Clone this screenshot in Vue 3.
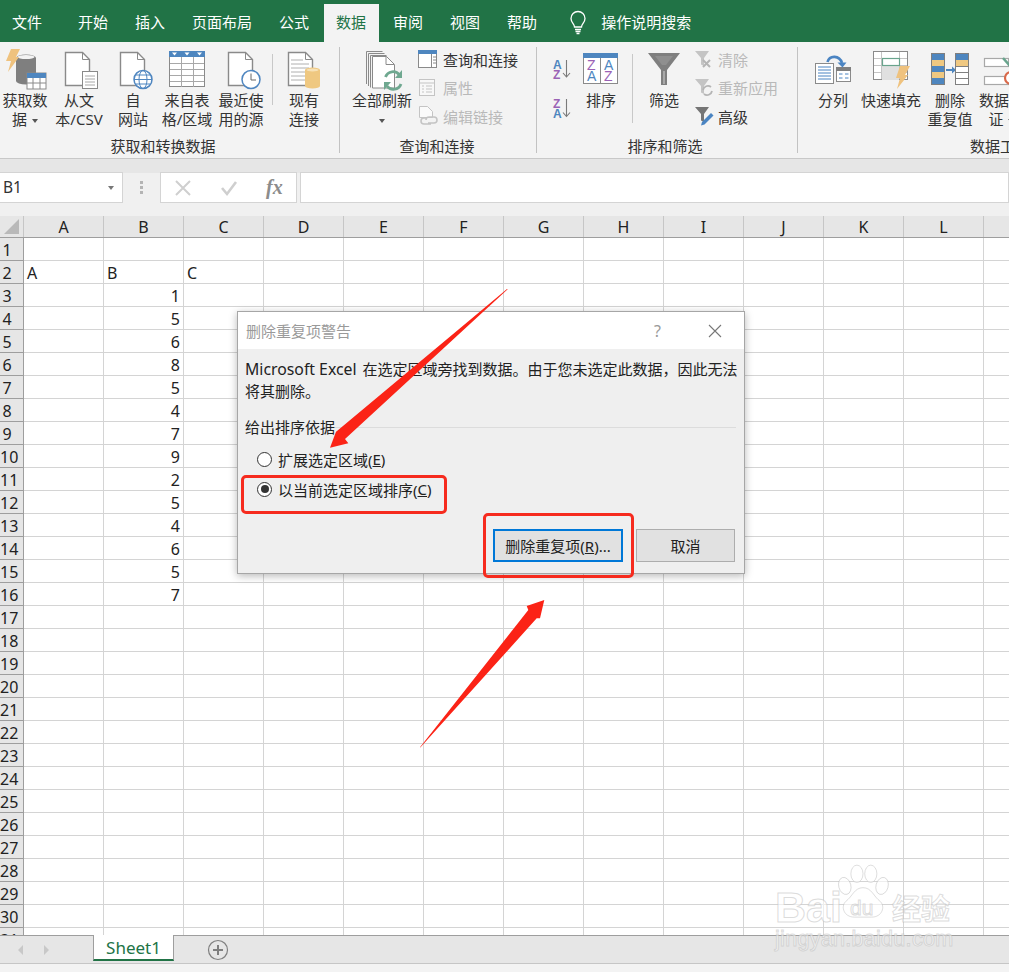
<script setup>
const tabs = ['开始', '插入', '页面布局', '公式', '数据', '审阅', '视图', '帮助']
const columns = 'ABCDEFGHIJKLM'.split('')
const rowNumbers = Array.from({ length: 31 }, (_, i) => i + 1)

// column B values, keyed by row number
const bValues = { 2: 'B', 3: 1, 4: 5, 5: 6, 6: 8, 7: 5, 8: 4, 9: 7, 10: 9, 11: 2, 12: 5, 13: 4, 14: 6, 15: 5, 16: 7 }

const cellText = (row, col) => {
  if (row === 2 && col === 'A') return 'A'
  if (row === 2 && col === 'C') return 'C'
  if (col === 'B') return bValues[row] ?? ''
  return ''
}
const isNumber = (row, col) => col === 'B' && row > 2
</script>

<template>
  <div class="app">
    <div class="tabbar">
      <span class="tab file">文件</span>
      <span v-for="t in tabs" :key="t" class="tab" :class="{ active: t === '数据' }">{{ t }}</span>
      <svg class="bulb" width="18" height="24" viewBox="0 0 18 24" fill="none" stroke="#fff" stroke-width="1.3">
        <path d="M5.5 16c0-3-3.5-4.500-3.500-8.500a7 7 0 0 1 14 0c0 4-3.500 5.500-3.500 8.500z" />
        <path d="M6 18.500h6M6.500 20.500h5M7.500 22.500h3" />
      </svg>
      <span class="search">操作说明搜索</span>
    </div>

    <div class="ribbon">
      <div class="group g1">
        <div class="group-body">
          <div class="tool w50">
            <svg width="50" height="44" viewBox="0 47 50 44">
              <path d="M16 58a10 3.500 0 0 1 20 0v23a10 3.500 0 0 1-20 0z" fill="#7f7f7f" />
              <ellipse cx="26" cy="57" rx="8.500" ry="2" fill="#f3f3f3" />
              <path d="M11 49h9l-4 8h3l-11 15 3-11H6z" fill="#efc27e" />
              <rect x="27" y="73" width="19" height="16" fill="#fff" stroke="#8a8a8a" />
              <rect x="27" y="73" width="19" height="5" fill="#4e86bf" />
              <path d="M33 78v11M40 78v11M27 83h19" stroke="#8a8a8a" />
            </svg>
            <div class="tool-label">获取数<br />据 <i class="caret"></i></div>
          </div>
          <div class="tool w58">
            <svg width="40" height="44" viewBox="60 47 40 44">
              <path d="M66.500 52.500h17l7 7v26h-24z" fill="#fff" stroke="#8a8a8a" stroke-width="1.400" />
              <path d="M83.500 52.500v7h7" fill="none" stroke="#8a8a8a" />
              <rect x="83.500" y="71.500" width="15" height="17" fill="#fff" stroke="#8a8a8a" />
              <path d="M86 76h10M86 79h10M86 82h10M86 85h10" stroke="#a8a8a8" />
            </svg>
            <div class="tool-label">从文<br />本/CSV</div>
          </div>
          <div class="tool w50">
            <svg width="40" height="44" viewBox="114 47 40 44">
              <path d="M121.500 52.500h17l7 7v26h-24z" fill="#fff" stroke="#8a8a8a" stroke-width="1.400" />
              <path d="M138.500 52.500v7h7" fill="none" stroke="#8a8a8a" />
              <circle cx="144" cy="79.500" r="9" fill="#fff" stroke="#4f86c0" stroke-width="1.500" />
              <ellipse cx="144" cy="79.500" rx="4" ry="9" fill="none" stroke="#4f86c0" />
              <path d="M135 79.500h18M136.500 75h15M136.500 84h15" stroke="#4f86c0" />
            </svg>
            <div class="tool-label">自<br />网站</div>
          </div>
          <div class="tool w58">
            <svg width="40" height="44" viewBox="167 47 40 44">
              <rect x="169.500" y="51.500" width="35" height="35" fill="#fff" stroke="#8a8a8a" />
              <rect x="169" y="51" width="36" height="6" fill="#4e86bf" />
              <path d="M172 52.500h5l-2.500 3zM184.500 52.500h5l-2.500 3zM197 52.500h5l-2.500 3z" fill="#fff" />
              <path d="M181.500 57v30M193.500 57v30M170 63.500h34M170 69.500h34M170 75.500h34M170 81.500h34" stroke="#a8a8a8" />
            </svg>
            <div class="tool-label">来自表<br />格/区域</div>
          </div>
          <div class="tool w50">
            <svg width="40" height="44" viewBox="221 47 40 44">
              <path d="M228.500 52.500h17l7 7v26h-24z" fill="#fff" stroke="#8a8a8a" stroke-width="1.400" />
              <path d="M245.500 52.500v7h7" fill="none" stroke="#8a8a8a" />
              <circle cx="251" cy="79.500" r="9" fill="#fff" stroke="#4f86c0" stroke-width="1.500" />
              <path d="M251 73.500v6.500h5" fill="none" stroke="#666" />
            </svg>
            <div class="tool-label">最近使<br />用的源</div>
          </div>
          <div class="vsep short"></div>
          <div class="tool existing">
            <svg width="40" height="44" viewBox="288 47 40 44">
              <path d="M292.500 52.500h17l7 7v26h-24z" fill="#fff" stroke="#8a8a8a" stroke-width="1.400" />
              <path d="M309.500 52.500v7h7" fill="none" stroke="#8a8a8a" />
              <path d="M295 60h12M295 64h18M295 68h18M295 72h14M295 76h14M295 80h14" stroke="#b0b0b0" />
              <path d="M309 70a7.500 2.500 0 0 1 15 0v16a7.500 2.500 0 0 1-15 0z" fill="#efc881" />
              <ellipse cx="316.500" cy="70" rx="6" ry="1.500" fill="#f7e2b8" />
            </svg>
            <div class="tool-label">现有<br />连接</div>
          </div>
        </div>
        <div class="group-label">获取和转换数据</div>
      </div>

      <div class="group g2">
        <div class="group-body">
          <div class="tool refresh">
            <svg width="40" height="44" viewBox="362 47 40 44">
              <path d="M366.500 84V51.500h16M368.500 86V53.500h16M370.500 87.500V55.500h16" fill="none" stroke="#8a8a8a" />
              <path d="M372.500 56.500h14l8 8v23.500h-22z" fill="#fff" stroke="#8a8a8a" />
              <path d="M386 56.500v8h8" fill="none" stroke="#8a8a8a" />
              <path d="M385.500 77a8 8 0 0 1 14-2M401 84a8 8 0 0 1-14 2" fill="none" stroke="#6fa890" stroke-width="2.800" />
              <path d="M402 70v8h-7zM384 90v-8h7z" fill="#6fa890" />
            </svg>
            <div class="tool-label">全部刷新<br /><i class="caret"></i></div>
          </div>
          <div class="small-col">
            <div class="small-item">
              <svg width="20" height="18" viewBox="419 50 20 18">
                <rect x="419.500" y="50.500" width="18" height="17" fill="#fff" stroke="#8a8a8a" />
                <rect x="419" y="50" width="19" height="4" fill="#4e86bf" />
                <path d="M432.500 54v13M434 57h3M434 60h3M434 63h3" stroke="#8a8a8a" />
              </svg>
              <span>查询和连接</span>
            </div>
            <div class="small-item off">
              <svg width="20" height="18" viewBox="420 79 20 18">
                <rect x="421.500" y="79.500" width="15" height="16" fill="#f8f8f8" stroke="#c4c4c4" />
                <path d="M421 83h16M424 86h2M428 86h6M424 89h2M428 89h6M424 92h2M428 92h6" stroke="#c4c4c4" />
              </svg>
              <span>属性</span>
            </div>
            <div class="small-item off">
              <svg width="20" height="20" viewBox="420 108 20 20">
                <path d="M421.500 108.500h8l5 5v6h-13z" fill="#fafafa" stroke="#c4c4c4" />
                <path d="M428 122a3 3 0 0 1 3-3h2.500M433 126h-7a3 3 0 0 1 0-6h3M430 125h6a3 3 0 0 0 0-6h-3" fill="none" stroke="#c4c4c4" stroke-width="1.600" />
              </svg>
              <span>编辑链接</span>
            </div>
          </div>
        </div>
        <div class="group-label">查询和连接</div>
      </div>

      <div class="group g3">
        <div class="group-body">
          <div class="sort-col">
            <svg width="20" height="20" viewBox="552 59 20 20">
              <text x="553" y="69" class="sort-a">A</text>
              <text x="553" y="78.500" class="sort-z">Z</text>
              <path d="M566.500 60v16.500M563 73l3.500 4 3.500-4" fill="none" stroke="#7a7a7a" stroke-width="1.100" />
            </svg>
            <svg width="20" height="22" viewBox="552 97 20 22">
              <text x="553" y="107.500" class="sort-z">Z</text>
              <text x="553" y="118" class="sort-a">A</text>
              <path d="M566.500 99v17M563 112.500l3.500 4 3.500-4" fill="none" stroke="#7a7a7a" stroke-width="1.100" />
            </svg>
          </div>
          <div class="tool sort">
            <svg width="38" height="44" viewBox="582 47 38 44">
              <rect x="583.500" y="53.500" width="34" height="30" fill="#fff" stroke="#8a8a8a" />
              <rect x="583" y="53" width="35" height="5" fill="#4e86bf" />
              <path d="M600.500 58v26" stroke="#8a8a8a" />
              <text x="587" y="70" class="sort-big z">Z</text>
              <text x="587" y="81" class="sort-big a">A</text>
              <text x="604" y="70" class="sort-big a">A</text>
              <text x="604" y="81" class="sort-big z">Z</text>
            </svg>
            <div class="tool-label">排序</div>
          </div>
          <div class="vsep tall"></div>
          <div class="tool filter">
            <svg width="36" height="44" viewBox="646 47 36 44">
              <path d="M648 53h32l-13 17v15h-6V70z" fill="#7f7f7f" />
              <path d="M655 56h18l-7 9h-4z" fill="#8f8f8f" />
              <path d="M663 71h2v13h-2z" fill="#a9a9a9" />
            </svg>
            <div class="tool-label">筛选</div>
          </div>
          <div class="small-col filters">
            <div class="small-item off">
              <svg width="18" height="20" viewBox="694 49 18 20">
                <path d="M695 51h14l-5 7v8l-3-1.500V58z" fill="#c4c4c4" />
                <path d="M703 60l7 7M710 60l-7 7" stroke="#b4b4b4" stroke-width="2" />
              </svg>
              <span>清除</span>
            </div>
            <div class="small-item off">
              <svg width="18" height="20" viewBox="694 78 18 20">
                <path d="M695 79h14l-5 7v8l-3-1.500V86z" fill="#c4c4c4" />
                <path d="M703 90a5 5 0 0 1 8-3M712 91a5 5 0 0 1-8 3" fill="none" stroke="#b4b4b4" stroke-width="1.800" />
              </svg>
              <span>重新应用</span>
            </div>
            <div class="small-item">
              <svg width="18" height="20" viewBox="694 107 18 20">
                <path d="M695 108h14l-5 7v8l-3-1.500V115z" fill="#757575" />
                <path d="M701 126.500l1-3.500 9-9 2.500 2.500-9 9z" fill="#4a84c2" />
              </svg>
              <span>高级</span>
            </div>
          </div>
        </div>
        <div class="group-label">排序和筛选</div>
      </div>

      <div class="group g4">
        <div class="group-body">
          <div class="tool w56">
            <svg width="40" height="44" viewBox="813 47 40 44">
              <rect x="815.500" y="63.500" width="18" height="20" fill="#fff" stroke="#8a8a8a" />
              <path d="M818 67h13M818 70h13M818 73h13M818 76h13M818 79h13" stroke="#4a84c2" />
              <rect x="836.500" y="67.500" width="14" height="14" fill="#fff" stroke="#8a8a8a" />
              <rect x="836" y="67" width="15" height="4" fill="#7f7f7f" />
              <path d="M839 74h3.500M845 74h3.500M839 78h3.500M845 78h3.500" stroke="#4a84c2" />
              <path d="M827.500 62c2-7 12-7 14.500 1" fill="none" stroke="#4a84c2" stroke-width="2.600" />
              <path d="M837.500 62.500h9l-4 5z" fill="#4a84c2" />
            </svg>
            <div class="tool-label">分列</div>
          </div>
          <div class="tool w60">
            <svg width="40" height="44" viewBox="871 47 40 44">
              <rect x="873.500" y="51.500" width="34" height="28" fill="#fff" stroke="#8a8a8a" />
              <path d="M881.500 52v27M899.500 52v27M874 58.500h33M874 65.500h33M874 72.500h33" stroke="#c4c4c4" />
              <rect x="882" y="66" width="17" height="14" fill="#e0e0e0" />
              <rect x="882.500" y="58.500" width="17" height="7" fill="#fff" stroke="#69a48d" stroke-width="1.200" />
              <path d="M900 66h10l-5 9h3l-11 14 3-11h-4z" fill="#efc27e" />
            </svg>
            <div class="tool-label">快速填充</div>
          </div>
          <div class="tool w58b">
            <svg width="40" height="44" viewBox="930 47 40 44">
              <rect x="931.500" y="53.500" width="13" height="31" fill="#fff" stroke="#7f7f7f" />
              <rect x="932" y="54" width="12" height="6" fill="#4e86bf" />
              <rect x="932" y="60" width="12" height="6" fill="#efc881" />
              <rect x="932" y="66" width="12" height="6" fill="#4e86bf" />
              <rect x="932" y="72" width="12" height="6" fill="#efc881" />
              <rect x="932" y="78" width="12" height="6" fill="#4e86bf" />
              <path d="M946 70h9" stroke="#4e86bf" stroke-width="2" />
              <path d="M952 66.500l4 3.500-4 3.500z" fill="#4e86bf" />
              <rect x="955.500" y="53.500" width="13" height="31" fill="#fff" stroke="#7f7f7f" />
              <rect x="956" y="54" width="12" height="6" fill="#4e86bf" />
              <rect x="956" y="60" width="12" height="6" fill="#efc881" />
              <path d="M956 66.500h12M956 72.500h12M956 78.500h12" stroke="#7f7f7f" />
            </svg>
            <div class="tool-label">删除<br />重复值</div>
          </div>
          <div class="tool validate">
            <svg width="50" height="44" viewBox="979 47 50 44">
              <rect x="984.500" y="58.500" width="24" height="8" fill="#fff" stroke="#a8a8a8" stroke-width="1.200" />
              <rect x="984.500" y="76.500" width="24" height="8" fill="#fff" stroke="#a8a8a8" stroke-width="1.200" />
              <path d="M1003 58l8 9" stroke="#69a48d" stroke-width="2.500" />
              <circle cx="1011" cy="78" r="6" fill="#fff" stroke="#d9694a" stroke-width="2.200" />
            </svg>
            <div class="tool-label">数据验<br />证 <i class="caret"></i></div>
          </div>
        </div>
        <div class="group-label tools-label">数据工具</div>
      </div>
    </div>

    <div class="formula-band">
      <div class="name-box">B1<i class="caret dark"></i></div>
      <div class="grip"><i></i><i></i><i></i></div>
      <div class="fx-box">
        <svg width="18" height="18" viewBox="0 0 18 18"><path d="M2 2l14 14M16 2L2 16" stroke="#cfcfcf" stroke-width="2" /></svg>
        <svg width="18" height="18" viewBox="0 0 18 18"><path d="M2 9l5 6L16 3" fill="none" stroke="#cfcfcf" stroke-width="2.600" /></svg>
        <span class="fx">fx</span>
      </div>
      <div class="formula-input"></div>
    </div>

    <div class="sheet">
      <div class="col-head">
        <div class="corner"><span class="corner-mark"></span></div>
        <div v-for="c in columns" :key="c" class="col-cell">{{ c }}</div>
      </div>
      <div v-for="r in rowNumbers" :key="r" class="row">
        <div class="row-head"><span>{{ r }}</span></div>
        <div v-for="c in columns" :key="c" class="cell" :class="{ num: isNumber(r, c) }">{{ cellText(r, c) }}</div>
      </div>
    </div>

    <div class="sheet-tabs">
      <svg class="nav" width="40" height="14" viewBox="0 0 40 14">
        <path d="M9 2L4 7l5 5zM30 2l5 5-5 5z" fill="#c8c8c8" />
      </svg>
      <div class="sheet-tab">Sheet1</div>
      <svg class="add" width="22" height="22" viewBox="0 0 22 22">
        <circle cx="11" cy="11" r="9.500" fill="none" stroke="#7f7f7f" stroke-width="1.200" />
        <path d="M11 6v10M6 11h10" stroke="#7f7f7f" stroke-width="2" />
      </svg>
    </div>
    <div class="statusbar"></div>

    <!-- dialog sits over the grid -->
    <div class="dialog">
      <div class="dialog-title">
        <span class="title-text">删除重复项警告</span>
        <span class="help">?</span>
        <svg width="14" height="14" viewBox="0 0 14 14"><path d="M1 1l12 12M13 1L1 13" stroke="#777" stroke-width="1.100" /></svg>
      </div>
      <div class="dialog-body">
        <p class="message"><span class="latin">Microsoft Excel</span> 在选定区域旁找到数据。由于您未选定此数据，因此无法<br />将其删除。</p>
        <div class="legend"><span>给出排序依据</span><i></i></div>
        <div class="radios">
          <div class="radio"><span class="dot"></span>扩展选定区域(<u>E</u>)</div>
          <div class="radio"><span class="dot on"></span>以当前选定区域排序(<u>C</u>)</div>
        </div>
        <div class="buttons">
          <button class="btn primary">删除重复项(<u>R</u>)...</button>
          <button class="btn">取消</button>
        </div>
      </div>
    </div>

    <!-- red annotations drawn on top of the screenshot -->
    <div class="mark mark-radio"></div>
    <div class="mark mark-button"></div>
    <svg class="arrows" width="1009" height="972" viewBox="0 0 1009 972">
      <path d="M507.700 289.300L345 439l3.300 4.300-18.300 4.400 6-16 1.300-1L507 289z" fill="#fb2316" />
      <path d="M420 747.300L528.300 610l-1.600-4 17.600-6-4.300 18.300-3.300-0L420.300 747.600z" fill="#fb2316" />
    </svg>

    <div class="watermark">
      <span class="wm-bai">Bai</span>
      <svg class="wm-paw" width="52" height="58" viewBox="0 0 60 66">
        <g fill="rgba(255,255,255,.6)" stroke="rgba(185,185,185,.55)">
          <ellipse cx="9" cy="26" rx="7" ry="10" transform="rotate(-15 9 26)" />
          <ellipse cx="23" cy="12" rx="7" ry="10" />
          <ellipse cx="39" cy="12" rx="7" ry="10" />
          <ellipse cx="52" cy="26" rx="7" ry="10" transform="rotate(15 52 26)" />
          <path d="M30 28c10 0 12 10 20 16 6 6 2 18-10 18H20C8 62 4 50 10 44c8-6 10-16 20-16z" />
        </g>
      </svg>
      <span class="wm-du">du</span>
      <span class="wm-jy">经验</span>
      <span class="wm-url">jingyan.baidu.com</span>
    </div>
  </div>
</template>

<style scoped>
.app {
  position: relative;
  width: 1009px;
  height: 972px;
  overflow: hidden;
  display: flex;
  flex-direction: column;
  background: #fff;
  font-family: "Noto Sans", "Noto Sans CJK SC", sans-serif;
  font-size: 15px;
  color: #333;
}
svg {
  overflow: visible;
}

/* title tabs */
.tabbar {
  height: 42px;
  flex: none;
  display: flex;
  align-items: flex-end;
  background: #217346;
  color: #fff;
}
.tab {
  height: 38px;
  line-height: 36px;
  padding: 0 13.5px;
  box-sizing: border-box;
}
.tab.file {
  padding: 0 22.5px 0 12px;
}
.tab.active {
  background: #f3f3f3;
  color: #217346;
  padding: 0 12.5px;
  margin: 0 1px;
  width: 55px;
}
.bulb {
  margin: 0 14px 7px 18.5px;
}
.search {
  line-height: 36px;
  height: 38px;
}

/* ribbon */
.ribbon {
  height: 117px;
  flex: none;
  display: flex;
  box-sizing: border-box;
  background: #f3f3f3;
  border-bottom: 1px solid #c8c8c8;
  overflow: hidden;
}
.group {
  flex: none;
  height: 106px;
  margin-top: 5px;
  box-sizing: border-box;
  border-right: 1px solid #c2c2c2;
}
.g1 { width: 340px; }
.g2 { width: 197px; }
.g3 { width: 261px; }
.g4 { width: 300px; border-right: 0; }
.group-body {
  height: 89px;
  display: flex;
}
.group-label {
  height: 17px;
  line-height: 20px;
  text-align: center;
}
.g1 .group-label { padding-right: 13px; }
.g2 .group-label { padding-right: 2px; }
.g3 .group-label { padding-right: 4px; }
.tools-label {
  width: 404px;
}
.tool {
  flex: none;
  display: flex;
  flex-direction: column;
  align-items: center;
}
.tool svg {
  flex: none;
}
.tool-label {
  line-height: 19px;
  text-align: center;
  white-space: nowrap;
}
.w50 { width: 50px; }
.w58 { width: 58px; }
.existing { width: 52px; }
.refresh { width: 80px; margin-left: 2px; }
.sort { width: 38px; margin-left: 10px; }
.filter { width: 36px; margin-left: 13px; }
.w56 { width: 56px; margin-left: 7px; }
.w60 { width: 60px; }
.w58b { width: 58px; }
.validate { width: 50px; align-items: flex-start; }
.validate .tool-label { width: 45px; }
.caret {
  display: inline-block;
  width: 0;
  height: 0;
  margin-left: 1px;
  vertical-align: middle;
  border-left: 3.5px solid transparent;
  border-right: 3.5px solid transparent;
  border-top: 4px solid #555;
}
.vsep {
  flex: none;
  width: 1px;
  background: #c8c8c8;
}
.vsep.short {
  height: 51px;
  margin: 7px 5px 0 6px;
}
.vsep.tall {
  height: 69px;
  margin: 7px 0 0 12px;
}
.small-col {
  margin: -2px 0 0 -4px;
  display: flex;
  flex-direction: column;
}
.small-col.filters {
  margin-left: 12px;
}
.small-item {
  height: 28.5px;
  display: flex;
  align-items: center;
  gap: 5px;
  white-space: nowrap;
}
.small-item svg {
  flex: none;
}
.small-item.off {
  color: #b9b9b9;
}
.filters .small-item {
  gap: 6px;
}
.sort-col {
  flex: none;
  width: 20px;
  margin: 12px 0 0 15px;
  display: flex;
  flex-direction: column;
  gap: 18px;
}
.sort-a,
.sort-z,
.sort-big {
  font-size: 12px;
  font-family: "Liberation Sans", sans-serif;
}
.sort-a { fill: #4e86bf; font-weight: 700; }
.sort-z { fill: #9a62b5; font-weight: 700; }
.sort-big { font-size: 14px; }
.sort-big.a { fill: #4e86bf; }
.sort-big.z { fill: #9a62b5; }

/* formula bar */
.formula-band {
  height: 57px;
  flex: none;
  display: flex;
  box-sizing: border-box;
  padding-top: 13px;
  background: linear-gradient(#e6e6e6 0 14px, #f0f0f0 14px);
}
.name-box,
.fx-box,
.formula-input {
  height: 31px;
  box-sizing: border-box;
  background: #fff;
  border: 1px solid #d4d4d4;
}
.name-box {
  width: 123px;
  padding-left: 3px;
  line-height: 29px;
  font-size: 15.500px;
  color: #333;
  display: flex;
  align-items: center;
  justify-content: space-between;
  border-left: 0;
  padding-right: 8px;
}
.caret.dark {
  border-top-color: #777;
}
.grip {
  width: 37px;
  display: flex;
  flex-direction: column;
  align-items: center;
  justify-content: center;
  gap: 2px;
  height: 31px;
}
.grip i {
  width: 3px;
  height: 3px;
  background: #b4b4b4;
}
.fx-box {
  width: 137px;
  display: flex;
  align-items: center;
  padding-left: 13px;
  gap: 28px;
}
.fx {
  font-family: "Liberation Serif", serif;
  font-style: italic;
  font-weight: 700;
  font-size: 20px;
  color: #8c8c8c;
}
.formula-input {
  flex: 1;
  margin-left: 3px;
}

/* grid */
.sheet {
  flex: 1;
  min-height: 0;
  overflow: hidden;
  color: #222;
}
.col-head,
.row {
  display: flex;
}
.col-head {
  height: 22px;
  background: #e6e6e6;
  border-bottom: 1px solid #9e9e9e;
  box-sizing: border-box;
}
.corner {
  flex: none;
  width: 24px;
  box-sizing: border-box;
  border-right: 1px solid #c6c6c6;
  position: relative;
}
.corner-mark {
  position: absolute;
  right: 4px;
  bottom: 3px;
  border-left: 15px solid transparent;
  border-bottom: 15px solid #b9b9b9;
}
.col-cell {
  flex: none;
  width: 80px;
  box-sizing: border-box;
  border-right: 1px solid #c6c6c6;
  text-align: center;
  line-height: 23px;
  font-size: 16px;
}
.row {
  height: 23px;
  box-sizing: border-box;
  border-bottom: 1px solid #d4d4d4;
}
.row-head {
  flex: none;
  width: 24px;
  height: 23px;
  box-sizing: border-box;
  background: #e6e6e6;
  border-right: 1px solid #9e9e9e;
  border-bottom: 1px solid #9e9e9e;
  line-height: 24px;
  font-size: 16px;
}
.row-head span {
  display: block;
  width: 14px;
  text-align: center;
  white-space: nowrap;
}
.cell {
  flex: none;
  width: 80px;
  box-sizing: border-box;
  border-right: 1px solid #d4d4d4;
  padding: 0 3px;
  line-height: 25px;
  font-size: 16px;
}
.cell.num {
  text-align: right;
}

/* sheet tabs */
.sheet-tabs {
  height: 29px;
  flex: none;
  box-sizing: border-box;
  display: flex;
  align-items: flex-start;
  background: #e6e6e6;
  border-top: 1px solid #9e9e9e;
  border-bottom: 1px solid #c6c6c6;
}
.nav {
  margin: 7px 0 0 14px;
}
.sheet-tab {
  width: 81px;
  height: 26px;
  margin: -1px 0 0 39px;
  box-sizing: border-box;
  background: #fff;
  border: 1px solid #9e9e9e;
  border-width: 0 1px;
  border-bottom: 2px solid #217346;
  color: #217346;
  text-align: center;
  line-height: 25px;
  font-size: 17px;
}
.add {
  margin: 3px 0 0 33px;
}
.statusbar {
  height: 8px;
  flex: none;
  background: #f3f3f3;
}

/* dialog */
.dialog {
  position: absolute;
  left: 237px;
  top: 311px;
  width: 508px;
  height: 263px;
  box-sizing: border-box;
  border: 1px solid #a6a6a6;
  box-shadow: 0 2px 8px rgba(0, 0, 0, 0.28);
  background: #efefef;
  display: flex;
  flex-direction: column;
}
.dialog-title {
  height: 37px;
  flex: none;
  background: #fff;
  display: flex;
  align-items: center;
  padding: 0 22px 0 8px;
  color: #9a9a9a;
}
.title-text {
  flex: 1;
}
.help {
  margin-right: 47px;
  font-size: 16px;
  color: #9a9a9a;
}
.dialog-body {
  flex: 1;
  padding: 9px 8px 0 7px;
  color: #222;
}
.message {
  margin: 0;
  line-height: 22px;
  white-space: nowrap;
}
.latin {
  font-size: 15.800px;
  margin-right: 2px;
}
.legend {
  margin-top: 14px;
  height: 22px;
  line-height: 22px;
  display: flex;
  align-items: center;
}
.legend i {
  flex: 1;
  height: 1px;
  background: #dcdcdc;
}
.radios {
  margin-top: 6px;
}
.radio {
  height: 30px;
  display: flex;
  align-items: center;
  padding-left: 12px;
  white-space: nowrap;
}
.dot {
  width: 15px;
  height: 15px;
  box-sizing: border-box;
  border: 1px solid #333;
  border-radius: 50%;
  background: #fff;
  margin-right: 6px;
  position: relative;
}
.dot.on::after {
  content: '';
  position: absolute;
  inset: 2.5px;
  border-radius: 50%;
  background: #333;
}
.buttons {
  display: flex;
  justify-content: flex-end;
  gap: 13px;
  margin-top: 25px;
  padding-right: 1px;
}
.btn {
  width: 99px;
  height: 33px;
  box-sizing: border-box;
  padding: 0;
  background: #e1e1e1;
  border: 1px solid #adadad;
  font: inherit;
  color: #222;
}
.btn.primary {
  width: 130px;
  border: 2px solid #0078d7;
}

/* annotations */
.mark {
  position: absolute;
  box-sizing: border-box;
  border: 3.500px solid #f62b1e;
  border-radius: 5px;
}
.mark-radio {
  left: 241px;
  top: 475px;
  width: 206px;
  height: 39px;
}
.mark-button {
  left: 483px;
  top: 513px;
  width: 151px;
  height: 65px;
}
.arrows {
  position: absolute;
  left: 0;
  top: 0;
  pointer-events: none;
}

/* watermark */
.watermark {
  position: absolute;
  left: 775px;
  top: 862px;
  width: 190px;
  height: 90px;
  font-family: "Liberation Sans", sans-serif;
  color: rgba(255, 255, 255, 0.6);
  -webkit-text-stroke: 1px rgba(185, 185, 185, 0.5);
}
.wm-bai,
.wm-du,
.wm-jy,
.wm-url,
.wm-paw {
  position: absolute;
}
.wm-bai {
  left: 0;
  top: 20px;
  font-size: 43px;
  font-weight: 700;
  line-height: 50px;
}
.wm-paw {
  left: 62px;
  top: 1px;
}
.wm-du {
  left: 75px;
  top: 33px;
  font-size: 21px;
  line-height: 26px;
}
.wm-jy {
  left: 117px;
  top: 27px;
  font-size: 29px;
  line-height: 36px;
  font-family: "Noto Sans CJK SC", sans-serif;
  font-weight: 700;
}
.wm-url {
  left: 0;
  top: 64px;
  font-size: 21.500px;
  line-height: 26px;
  letter-spacing: 0.3px;
}
</style>

<style>
html, body {
  margin: 0;
  overflow: hidden;
}
</style>
